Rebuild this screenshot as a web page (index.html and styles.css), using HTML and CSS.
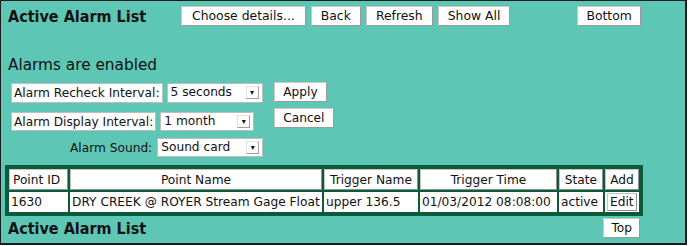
FILE: index.html
```html
<!DOCTYPE html>
<html>
<head>
<meta charset="utf-8">
<link rel="stylesheet" href="styles.css">
</head>
<body>
<div class="frame">
  <div class="topbar">
    <h1 class="title">Active Alarm List</h1>
    <div class="btns">
      <span class="btn btn-choose">Choose details...</span>
      <span class="btn">Back</span>
      <span class="btn">Refresh</span>
      <span class="btn">Show All</span>
    </div>
    <span class="btn btn-bottom">Bottom</span>
  </div>
  <div class="status">Alarms are enabled</div>
  <div class="settings">
    <div class="fields">
      <div class="row row-recheck">
        <span class="lbl">Alarm Recheck Interval:</span>
        <span class="sel sel-recheck">5 seconds<span class="arrow">▾</span></span>
      </div>
      <div class="row row-display">
        <span class="lbl">Alarm Display Interval:</span>
        <span class="sel sel-display">1 month<span class="arrow">▾</span></span>
      </div>
      <div class="row row-sound">
        <span class="plain">Alarm Sound:</span>
        <span class="sel sel-sound">Sound card<span class="arrow">▾</span></span>
      </div>
    </div>
    <div class="actions">
      <span class="btn">Apply</span>
      <span class="btn">Cancel</span>
    </div>
  </div>
  <table class="alarms">
    <tr>
      <th class="c-id">Point ID</th>
      <th class="c-name">Point Name</th>
      <th class="c-trig">Trigger Name</th>
      <th class="c-time">Trigger Time</th>
      <th class="c-state">State</th>
      <th class="c-btn">Add</th>
    </tr>
    <tr>
      <td>1630</td>
      <td>DRY CREEK @ ROYER Stream Gage Float</td>
      <td>upper 136.5</td>
      <td>01/03/2012 08:08:00</td>
      <td>active</td>
      <td class="c-btn"><span class="cellbtn">Edit</span></td>
    </tr>
  </table>
  <div class="footbar">
    <h1 class="title">Active Alarm List</h1>
    <span class="btn btn-top">Top</span>
  </div>
</div>
</body>
</html>
```
FILE: styles.css
```css
html, body {
  margin: 0;
  padding: 0;
  background: #ffffff;
}
body {
  font-family: "DejaVu Sans", Verdana, sans-serif;
  font-size: 12.2px;
  color: #111;
}
.frame {
  box-sizing: border-box;
  width: 687px;
  height: 245px;
  background: #5ec6b4;
  border: 1px solid #1b1b1b;
  border-right-width: 2px;
  border-bottom-width: 2px;
  padding: 4px 0 0 7px;
}
.topbar {
  display: flex;
  align-items: center;
  height: 22px;
}
.title {
  margin: 0;
  font-family: "DejaVu Sans Condensed", "DejaVu Sans", sans-serif;
  font-size: 16px;
  font-weight: bold;
  width: 173px;
  color: #111;
}
.btns {
  display: flex;
  gap: 5px;
}
.btn {
  display: inline-block;
  box-sizing: border-box;
  background: #fff;
  border: 1px solid #c8c8c8;
  border-right-color: #9a9a9a;
  border-bottom-color: #9a9a9a;
  height: 20px;
  line-height: 18px;
  padding: 0 9px;
  font-size: 12.4px;
  color: #111;
  white-space: nowrap;
}
.btns .btn-choose {
  padding: 0 10px;
}
.btn-bottom {
  margin-left: 67px;
  padding: 0 8px;
}
.status {
  font-size: 15.3px;
  margin-top: 28px;
  height: 20px;
  line-height: 20px;
}
.settings {
  display: flex;
  margin-top: 8px;
  margin-left: 3px;
}
.fields {
  display: flex;
  flex-direction: column;
}
.row {
  display: flex;
  align-items: center;
  gap: 4px;
  height: 20px;
}
.row-display {
  margin-top: 9px;
  height: 19px;
}
.row-sound {
  margin-top: 7px;
  height: 19px;
  padding-left: 59px;
  gap: 5px;
}
.lbl {
  box-sizing: border-box;
  background: #fff;
  border: 1px solid #bdbdbd;
  height: 100%;
  line-height: 18px;
  padding: 0 2px;
  white-space: nowrap;
}
.plain {
  white-space: nowrap;
}
.sel {
  position: relative;
  box-sizing: border-box;
  background: #fff;
  border: 1px solid #bdbdbd;
  height: 100%;
  line-height: 17px;
  padding: 0 3px;
  white-space: nowrap;
}
.sel-recheck { width: 96px; }
.sel-display { width: 94px; }
.sel-sound { width: 106px; }
.arrow {
  position: absolute;
  right: 3px;
  top: 2px;
  width: 13px;
  height: 13px;
  line-height: 12px;
  font-size: 8px;
  text-align: center;
  border: 1px solid #e0e0e0;
  border-right-color: #a0a0a0;
  border-bottom-color: #a0a0a0;
  box-sizing: border-box;
}
.actions {
  display: flex;
  flex-direction: column;
  align-items: flex-start;
  gap: 6px;
  margin-left: 11px;
  margin-top: -1px;
}
.actions .btn {
  font-size: 12.2px;
  padding: 0 8px;
}
.alarms {
  margin-top: 8px;
  margin-left: -3px;
  border-collapse: separate;
  border-spacing: 2px;
  border: 2px solid #0b5a38;
  background: #0b5a38;
  font-size: 12.2px;
}
.alarms th, .alarms td {
  background: #fff;
  height: 20px;
  padding: 0 1px;
  white-space: nowrap;
  text-align: left;
  font-weight: normal;
  box-sizing: border-box;
}
.alarms th {
  height: 21px;
  border: 1px solid #c4c4c4;
  border-right-color: #8f8f8f;
  border-bottom-color: #8f8f8f;
  text-align: center;
}
.alarms th:first-child { text-align: left; padding-left: 3px; }
.alarms td {
  border: 1px solid #fff;
}
.alarms td.c-btn {
  padding: 0 1px;
}
.cellbtn {
  display: block;
  border: 1px solid #c4c4c4;
  border-right-color: #8f8f8f;
  border-bottom-color: #8f8f8f;
  padding: 0 2px;
  line-height: 16px;
}
.c-id { width: 59px; }
.c-name { width: 252px; }
.c-trig { width: 94px; }
.c-time { width: 137px; }
.c-state { width: 44px; }
.alarms th.c-btn { width: 34px; }
.footbar {
  display: flex;
  align-items: center;
  justify-content: space-between;
  width: 632px;
  margin-top: 2px;
}
.btn-top {
  font-size: 12.2px;
  padding: 0 7px;
}
```
